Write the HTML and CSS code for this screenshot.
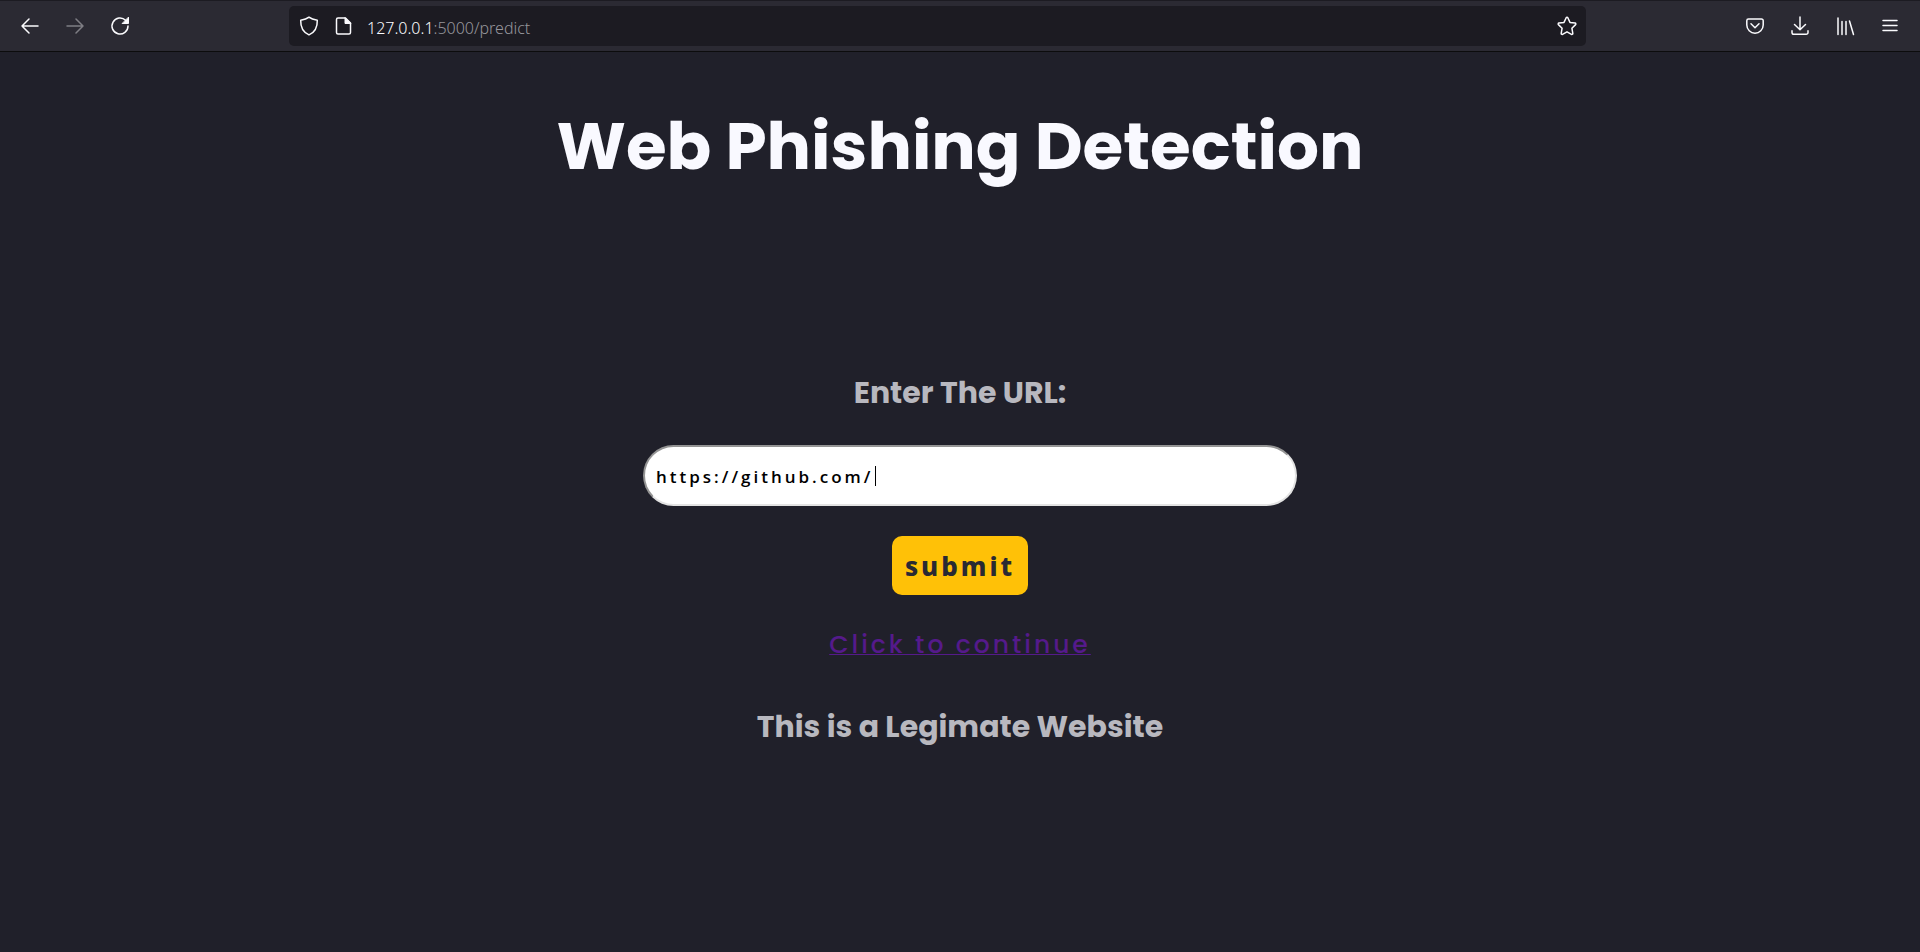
FILE: index.html
```html
<!DOCTYPE html>
<html lang="en">
<head>
<meta charset="utf-8">
<meta name="viewport" content="width=device-width, initial-scale=1">
<title>Web Phishing Detection</title>
<link rel="stylesheet" href="styles.css">
</head>
<body>
<header class="toolbar">
  <nav class="nav-group" aria-label="Navigation">
    <button class="icon-button" type="button" aria-label="Back"><svg class="icon" viewBox="0 0 20 20"><path d="M18 10H2M9 3L2 10l7 7"/></svg></button>
    <button class="icon-button" type="button" aria-label="Forward" disabled><svg class="icon" viewBox="0 0 20 20"><path d="M2 10h16M11 3l7 7-7 7"/></svg></button>
    <button class="icon-button" type="button" aria-label="Reload"><svg class="icon" viewBox="0 0 20 20"><path d="M18 10a8 8 0 1 1-2.400-5.700"/><path class="solid" d="M18.500 1.500v6h-6z"/></svg></button>
  </nav>
  <div class="address">
    <svg class="icon" viewBox="0 0 20 20"><path d="M10 1.200C7.500 3.200 4.500 3.800 1.700 4.200 1.500 10.500 3.500 16 10 18.900 16.500 16 18.500 10.500 18.300 4.200 15.500 3.800 12.500 3.200 10 1.200z"/></svg>
    <svg class="icon" viewBox="0 0 20 20"><path d="M5 2h7.500l5 5v9.500a1.500 1.500 0 0 1-1.500 1.500H5a1.500 1.500 0 0 1-1.500-1.500v-13A1.500 1.500 0 0 1 5 2z"/><path class="solid" d="M12 2v5.500h5.500z"/></svg>
    <span class="url">127.0.0.1<span class="url-path">:5000/predict</span></span>
    <button class="icon-button star" type="button" aria-label="Bookmark"><svg class="icon" viewBox="0 0 20 20"><path d="M9.200 1.700a.9.900 0 0 1 1.600 0l2.200 4.700 5.100.700a.9.900 0 0 1 .5 1.500l-3.700 3.600.9 5.100a.9.900 0 0 1-1.300 1L10 15.800l-4.500 2.500a.9.900 0 0 1-1.300-1l.9-5.100L1.400 8.600a.9.900 0 0 1 .5-1.500l5.100-.700z"/></svg></button>
  </div>
  <div class="tool-group">
    <button class="icon-button" type="button" aria-label="Pocket"><svg class="icon" viewBox="0 0 20 20"><path d="M3.500 3h13A1.700 1.700 0 0 1 18.200 4.700V9a8.200 8.200 0 0 1-16.400 0V4.700A1.700 1.700 0 0 1 3.500 3z"/><path d="M6 7.800l4 3.900 4-3.900"/></svg></button>
    <button class="icon-button" type="button" aria-label="Downloads"><svg class="icon" viewBox="0 0 20 20"><path d="M10 1v12.500M4.500 8.500l5.500 5.300 5.500-5.300M2 14.800V16.500a1.800 1.800 0 0 0 1.800 1.800h12.400a1.800 1.800 0 0 0 1.800-1.800v-1.700"/></svg></button>
    <button class="icon-button" type="button" aria-label="Library"><svg class="icon" viewBox="0 0 20 20"><path d="M3 2v16.500M7 5.500v13M11 5.500v13M14.500 5l4 13.500"/></svg></button>
    <button class="icon-button" type="button" aria-label="Menu"><svg class="icon" viewBox="0 0 20 20"><path d="M3 4.500h14M3 9.500h14M3 14.500h14"/></svg></button>
  </div>
</header>
<main class="page">
  <h1 class="title">Web Phishing Detection</h1>
  <form class="form">
    <label class="label" for="site-url">Enter The URL:</label>
    <div class="field">
      <input class="input" id="site-url" type="text" value="https://github.com/" autocomplete="off" spellcheck="false">
      <span class="caret"></span>
    </div>
    <button class="submit" type="submit">submit</button>
  </form>
  <a class="link" href="https://github.com/">Click to continue</a>
  <h2 class="result">This is a Legimate Website</h2>
</main>
</body>
</html>
```
FILE: styles.css
```css
* { box-sizing: border-box; }

body {
  margin: 0;
  min-height: 100vh;
  background: #20202a;
  font-family: Poppins, Inter, sans-serif;
}

.toolbar {
  display: grid;
  grid-template-columns: 289px minmax(0, 1fr) 334px;
  align-items: center;
  height: 52px;
  background: #2b2a33;
  border-top: 1px solid #1c1b22;
  border-bottom: 1px solid #0c0c0d;
}

.nav-group,
.tool-group {
  display: flex;
  align-items: center;
  gap: 25px;
}

.nav-group { padding-left: 20px; }

.tool-group {
  justify-content: flex-end;
  padding-right: 20px;
}

.icon-button {
  display: flex;
  padding: 0;
  border: 0;
  background: none;
  color: #fbfbfe;
}

.icon-button:disabled { opacity: 0.4; }

.icon {
  width: 20px;
  height: 20px;
  flex: none;
  fill: none;
  stroke: currentColor;
  stroke-width: 1.5;
  stroke-linecap: round;
  stroke-linejoin: round;
}

.icon .solid { fill: currentColor; stroke-width: 1; }

.address {
  display: flex;
  align-items: center;
  height: 40px;
  padding: 0 9px 0 10px;
  gap: 14px;
  border-radius: 5px;
  background: #1c1b22;
  color: #fbfbfe;
}

.url {
  padding-top: 3px;
  font: 300 16px/24px "Noto Sans", "Open Sans", sans-serif;
}

.url-path { color: #96969c; }

.star { margin-left: auto; }

.page {
  display: flex;
  flex-direction: column;
  align-items: center;
  padding: 46px 20px 40px;
}

.title {
  margin: 0 0 150px;
  font-size: 66px;
  line-height: 96px;
  font-weight: 700;
  color: #f9f9ff;
  text-align: center;
}

.form {
  display: flex;
  flex-direction: column;
  align-items: center;
  width: 100%;
}

.label,
.result {
  margin: 0;
  font-size: 30px;
  line-height: 44px;
  font-weight: 700;
  color: #b8b8bf;
}

.label { margin: 27px 0 30px; }

.field {
  position: relative;
  width: 654px;
  max-width: 100%;
  margin-left: 20px;
}

.input {
  display: block;
  width: 100%;
  height: 61px;
  padding: 2px 11px 0;
  border: 2px solid;
  border-color: #949494 #e3e3e3 #e3e3e3 #949494;
  border-radius: 31px;
  background: #fff;
  color: #000;
  font: 600 17px/24px "Open Sans", "Noto Sans", sans-serif;
  letter-spacing: 3px;
  outline: 0;
}

.caret {
  position: absolute;
  left: 232px;
  top: 21px;
  width: 1px;
  height: 20px;
  background: #000;
}

.submit {
  height: 59px;
  margin-top: 30px;
  padding: 0 13px;
  border: 0;
  border-radius: 10px;
  background: #ffc107;
  color: #292933;
  font: 800 26px/36px "Noto Sans", "Open Sans", sans-serif;
  letter-spacing: 3px;
}

.link {
  margin: 30px 0 40px;
  color: #551a8b;
  font-size: 25px;
  line-height: 40px;
  font-weight: 500;
  letter-spacing: 3px;
  text-decoration-thickness: 1px;
}
```
